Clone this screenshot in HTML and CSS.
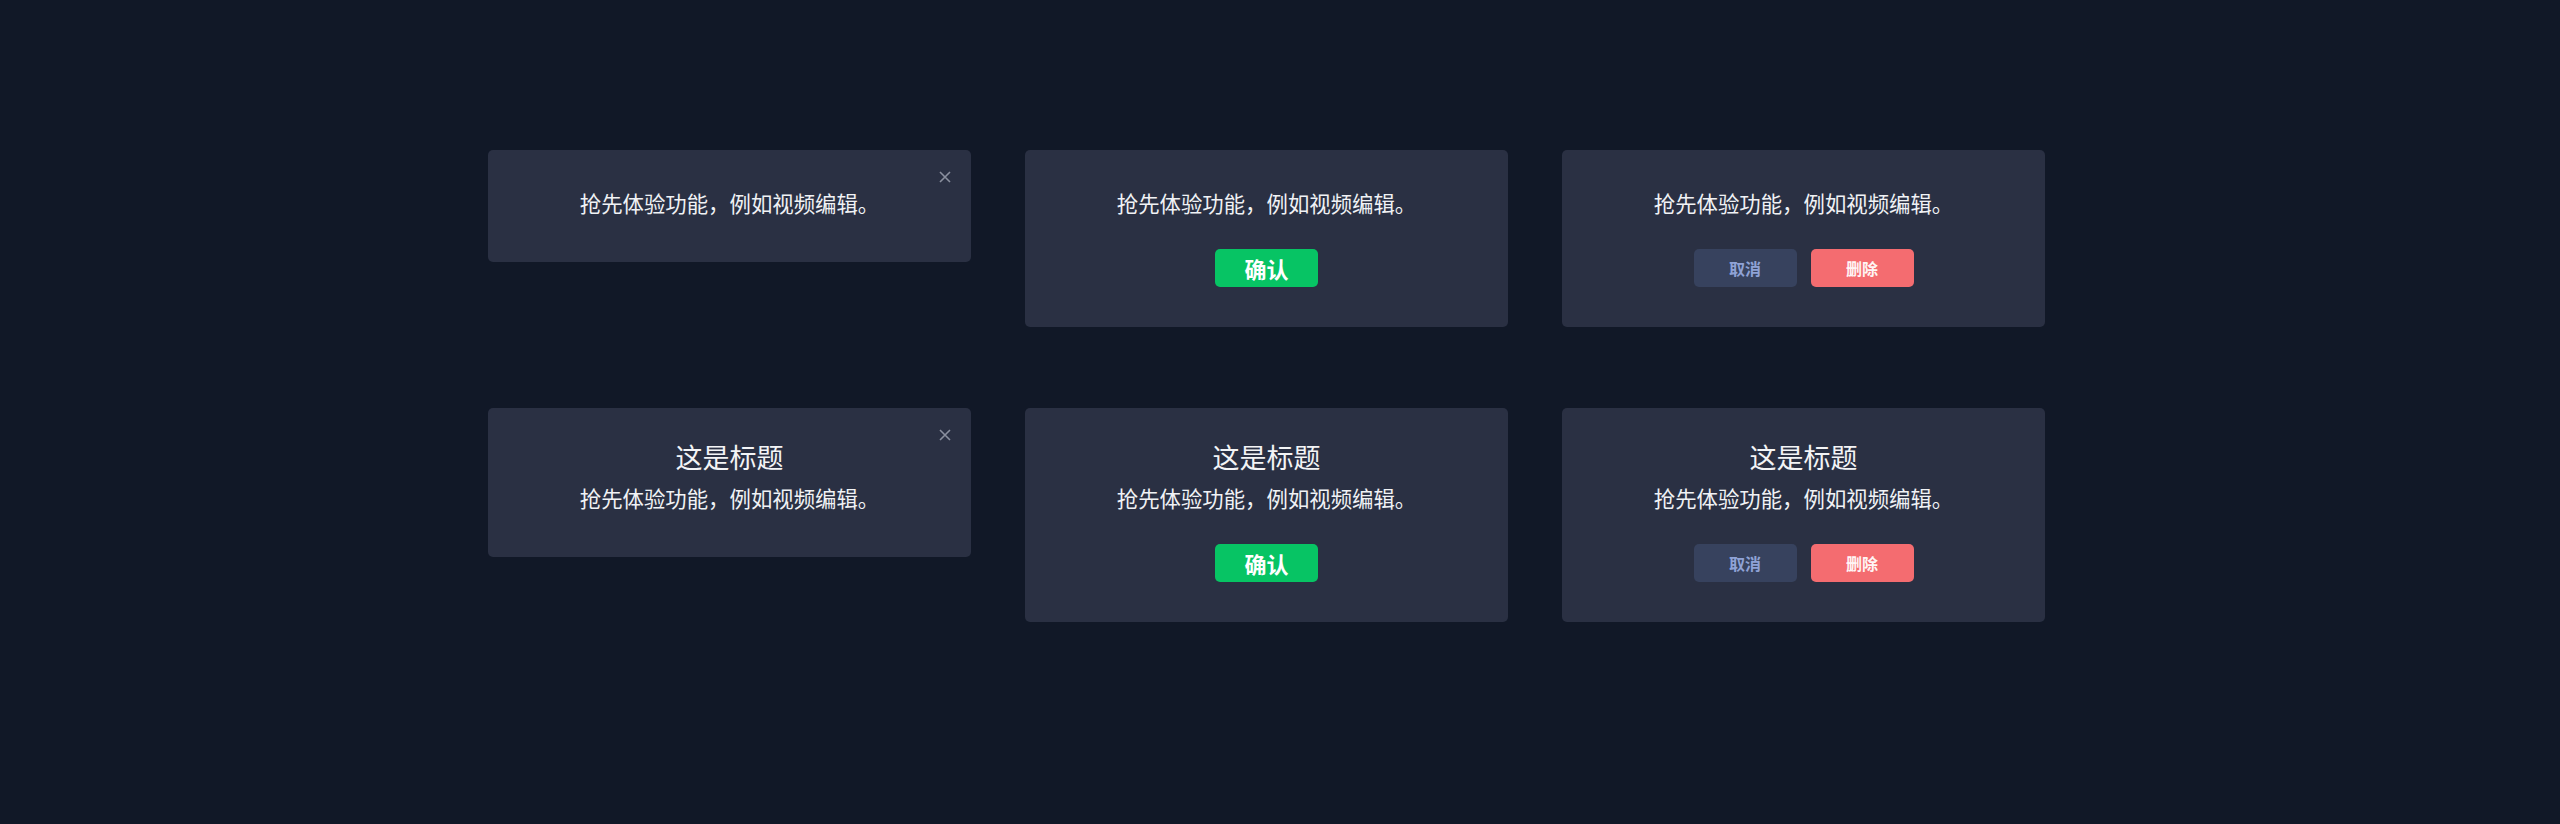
FILE: index.html
```html
<!DOCTYPE html>
<html lang="zh-CN">
<head>
<meta charset="utf-8">
<title>Dialogs</title>
<link rel="stylesheet" href="styles.css">
</head>
<body>
<div class="page">
  <div class="grid">
    <div class="card card-plain">
      <button class="close" aria-label="close"><svg viewBox="0 0 12 12" width="12" height="12"><path d="M1 1L11 11M11 1L1 11" stroke="currentColor" stroke-width="1.6" fill="none"/></svg></button>
      <p class="body">抢先体验功能，例如视频编辑。</p>
    </div>
    <div class="card">
      <p class="body">抢先体验功能，例如视频编辑。</p>
      <div class="actions">
        <button class="btn btn-confirm">确认</button>
      </div>
    </div>
    <div class="card">
      <p class="body">抢先体验功能，例如视频编辑。</p>
      <div class="actions">
        <button class="btn btn-cancel">取消</button>
        <button class="btn btn-danger">删除</button>
      </div>
    </div>

    <div class="card card-titled card-plain">
      <button class="close" aria-label="close"><svg viewBox="0 0 12 12" width="12" height="12"><path d="M1 1L11 11M11 1L1 11" stroke="currentColor" stroke-width="1.6" fill="none"/></svg></button>
      <h2 class="title">这是标题</h2>
      <p class="body">抢先体验功能，例如视频编辑。</p>
    </div>
    <div class="card card-titled">
      <h2 class="title">这是标题</h2>
      <p class="body">抢先体验功能，例如视频编辑。</p>
      <div class="actions">
        <button class="btn btn-confirm">确认</button>
      </div>
    </div>
    <div class="card card-titled">
      <h2 class="title">这是标题</h2>
      <p class="body">抢先体验功能，例如视频编辑。</p>
      <div class="actions">
        <button class="btn btn-cancel">取消</button>
        <button class="btn btn-danger">删除</button>
      </div>
    </div>
  </div>
</div>
</body>
</html>
```
FILE: styles.css
```css
* { box-sizing: border-box; }
html, body {
  margin: 0;
  padding: 0;
  background: #111827;
  font-family: "Noto Sans CJK SC", "Noto Sans", sans-serif;
}
.page {
  min-height: 824px;
  padding: 150px 0 0 488px;
}
.grid {
  display: grid;
  grid-template-columns: repeat(3, 483px);
  column-gap: 54px;
  row-gap: 81px;
  align-items: start;
}
.card {
  position: relative;
  background: #2a3043;
  border-radius: 5px;
  padding: 38px 40px 40px;
  text-align: center;
  color: #f0f2f5;
}
.card-plain { padding-bottom: 44px; }
.card-titled { padding-top: 31px; }
.title {
  margin: 0 0 8px;
  font-size: 27px;
  line-height: 36px;
  font-weight: 400;
  color: #f3f4f6;
}
.body {
  margin: 0;
  font-size: 21.4px;
  line-height: 30px;
  color: #f0f2f5;
}
.actions {
  margin-top: 31px;
  display: flex;
  justify-content: center;
  gap: 14px;
}
.btn {
  width: 103px;
  height: 38px;
  border: none;
  border-radius: 5px;
  font-family: "Noto Sans CJK SC", "Noto Sans", sans-serif;
  padding: 0;
  cursor: pointer;
}
.btn-confirm {
  background: #07c464;
  color: #ffffff;
  font-size: 22px;
  font-weight: 700;
}
.btn-cancel {
  background: #37425e;
  color: #8fa2d6;
  font-size: 16px;
  font-weight: 600;
}
.btn-danger {
  background: #f46c70;
  color: #fff5f5;
  font-size: 16px;
  font-weight: 600;
}
.close {
  position: absolute;
  top: 21px;
  right: 20px;
  width: 12px;
  height: 12px;
  padding: 0;
  border: none;
  background: transparent;
  color: #8a8f9e;
  display: flex;
  cursor: pointer;
}
```
